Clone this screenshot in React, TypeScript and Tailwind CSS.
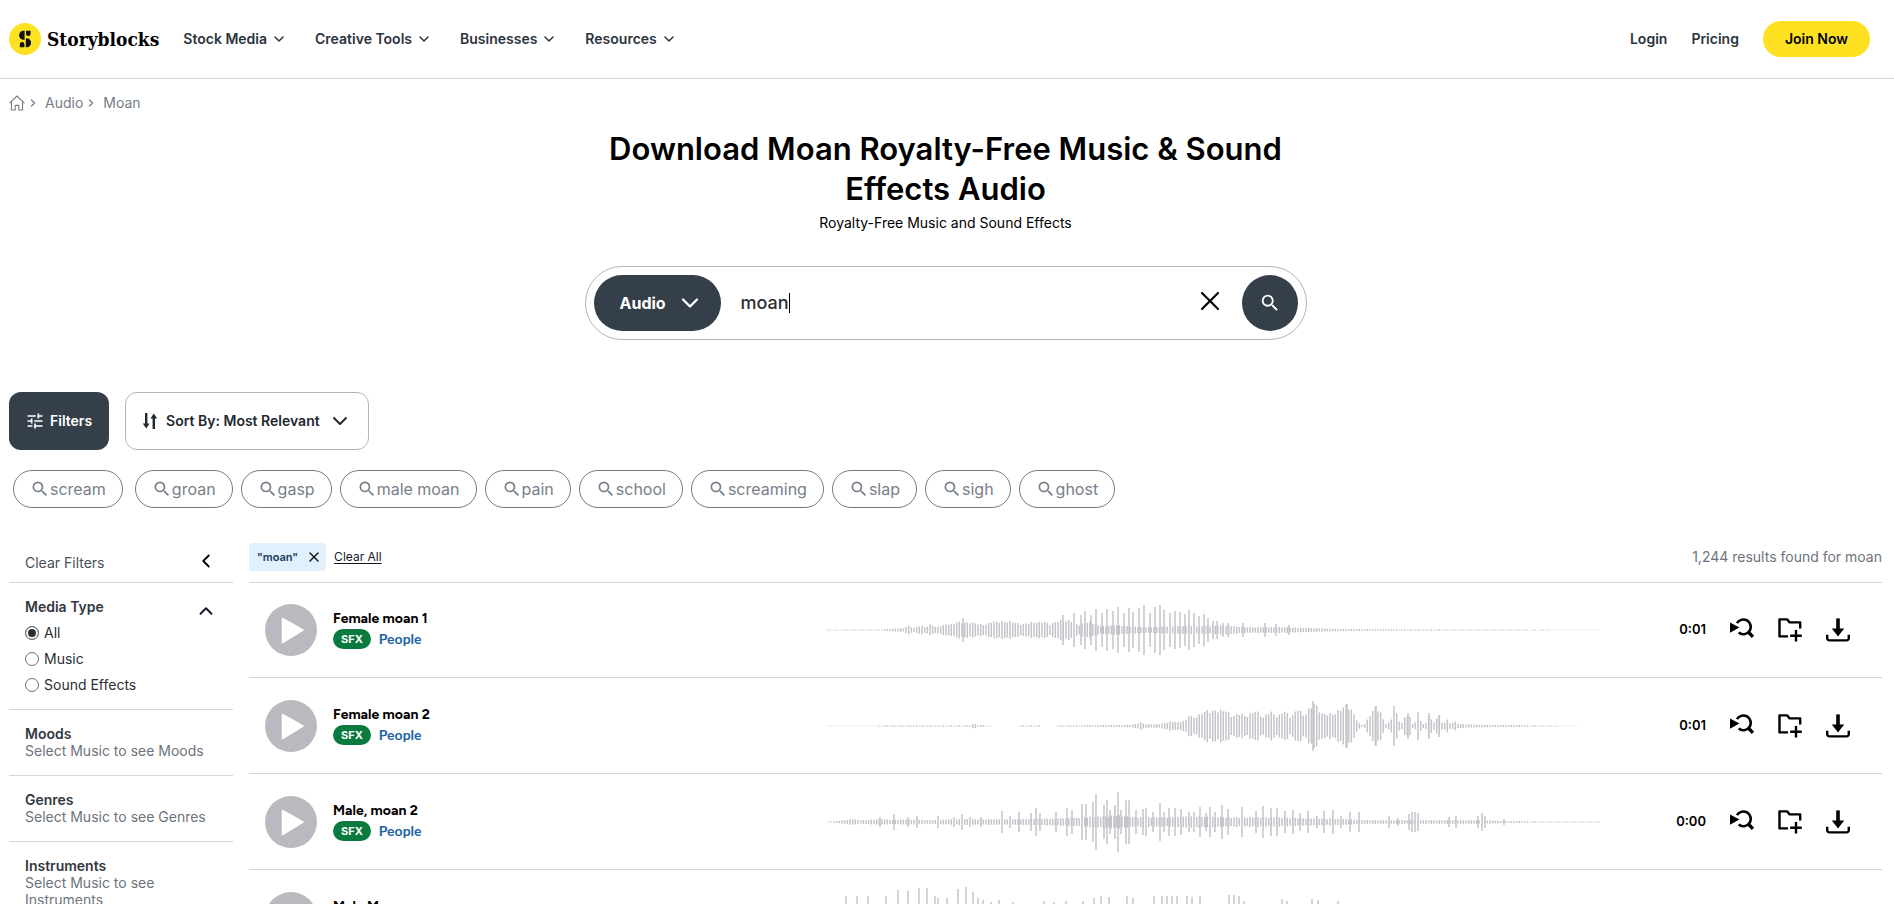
import React from "react";
import { ChevronDown, ChevronLeft, ChevronRight, ChevronUp, X } from "lucide-react";
import { MdSearch, MdTune } from "react-icons/md";

type Point = [number, number];

type Track = {
  title: string;
  duration: string;
  // [x, amplitude] pairs in a 776 x 72 box
  envelope: Point[];
  peaks: Point[];
};

const navItems = ["Stock Media", "Creative Tools", "Businesses", "Resources"];

const suggestions = [
  "scream", "groan", "gasp", "male moan", "pain",
  "school", "screaming", "slap", "sigh", "ghost",
];

const mediaTypes = ["All", "Music", "Sound Effects"];

const lockedFilters = [
  { name: "Moods", hint: "Select Music to see Moods" },
  { name: "Genres", hint: "Select Music to see Genres" },
  { name: "Instruments", hint: "Select Music to see Instruments" },
];

const tracks: Track[] = [
  {
    title: "Female moan 1",
    duration: "0:01",
    envelope: [
      [0, 0.4], [54, 0.5], [66, 1.5], [78, 2], [82, 5], [88, 2], [94, 5], [99, 3], [105, 6], [110, 3], [120, 6],
      [126, 6], [131, 9], [137, 8], [145, 8], [155, 6], [160, 6], [166, 9], [186, 9], [196, 6], [204, 8], [218, 9],
      [224, 6], [232, 10], [246, 10], [252, 5], [262, 9], [274, 4], [290, 5], [320, 3], [345, 4], [375, 4],
      [400, 5], [420, 3], [440, 3], [460, 3], [490, 2], [520, 1], [560, 0.8], [680, 0.5], [776, 0.2],
    ],
    peaks: [
      [137, 12], [237, 15], [248, 17], [255, 15], [259, 19], [265, 15], [270, 21], [276, 17], [281, 21], [287, 19],
      [292, 23], [298, 17], [303, 22], [307, 18], [313, 22], [318, 25], [324, 17], [329, 23], [334, 25], [338, 20],
      [344, 17], [349, 19], [354, 18], [359, 16], [363, 20], [368, 17], [373, 14], [378, 16], [382, 12], [387, 9],
      [391, 9], [397, 7], [402, 7], [417, 7], [439, 7], [450, 6], [463, 5],
    ],
  },
  {
    title: "Female moan 2",
    duration: "0:01",
    envelope: [
      [0, 0.3], [50, 0.3], [55, 0.7], [137, 0.7], [144, 1], [148, 3], [152, 1], [164, 0.5], [168, 0.1], [190, 0.1],
      [195, 0.7], [214, 0.7], [216, 0.1], [230, 0.1], [232, 0.7], [290, 1], [308, 1.5], [314, 4], [320, 2], [335, 2],
      [345, 5], [352, 4], [360, 6], [361, 13], [368, 9], [374, 12], [378, 16], [400, 17], [406, 10], [414, 14],
      [420, 10], [430, 17], [437, 9], [444, 16], [452, 10], [458, 17], [465, 9], [472, 19], [478, 11], [488, 25],
      [496, 13], [508, 13], [521, 23], [527, 15], [532, 4], [535, 1], [539, 2], [545, 14], [550, 21], [556, 12],
      [559, 2], [562, 2], [566, 9], [568, 21], [572, 9], [575, 1], [580, 12], [583, 13], [586, 2], [589, 3],
      [592, 14], [596, 2], [600, 3], [603, 14], [607, 2], [612, 12], [617, 2], [621, 7], [625, 2], [629, 5],
      [633, 2], [660, 1.2], [700, 0.8], [726, 0.5], [740, 0.3], [776, 0.1],
    ],
    peaks: [[487, 25], [521, 22], [550, 20], [568, 20], [582, 13], [592, 13], [603, 13], [613, 11]],
  },
  {
    title: "Male, moan 2",
    duration: "0:00",
    envelope: [
      [0, 0.2], [10, 1], [26, 3], [34, 2], [55, 3], [68, 2], [82, 3], [100, 2], [130, 3], [160, 3], [180, 3],
      [240, 4], [260, 5], [290, 7], [310, 5], [340, 5], [370, 6], [400, 5], [440, 5], [480, 4], [520, 3],
      [540, 2], [560, 2], [640, 2], [660, 2], [680, 1], [720, 0.6], [776, 0.5],
    ],
    peaks: [
      [54, 5], [68, 8], [82, 5], [91, 6], [112, 6], [128, 5], [136, 8], [144, 5], [155, 5], [176, 11], [184, 6],
      [193, 10], [205, 9], [210, 14], [214, 9], [230, 10], [241, 14], [246, 12], [256, 18], [260, 18], [267, 20],
      [270, 28], [278, 17], [281, 22], [284, 12], [289, 17], [292, 30], [295, 12], [300, 22], [303, 22], [310, 12],
      [317, 13], [320, 14], [327, 10], [334, 19], [338, 10], [343, 14], [349, 14], [355, 13], [363, 10], [368, 10],
      [374, 15], [380, 9], [384, 15], [389, 10], [396, 17], [402, 13], [416, 15], [430, 11], [437, 16], [445, 14],
      [451, 14], [459, 11], [467, 12], [474, 9], [482, 11], [491, 6], [498, 11], [507, 12], [515, 6], [524, 10],
      [533, 10], [563, 6], [572, 4], [583, 8], [586, 10], [589, 10], [592, 9], [623, 5], [630, 6], [652, 6],
      [656, 9], [659, 6], [678, 3],
    ],
  },
  {
    title: "Male Moan",
    duration: "0:01",
    envelope: [[0, 1], [20, 6], [80, 11], [150, 12], [240, 7], [330, 10], [420, 10], [520, 8], [700, 3], [776, 1]],
    peaks: [
      [20, 22], [31, 22], [42, 22], [60, 22], [72, 28], [82, 27], [93, 30], [101, 30], [109, 22], [112, 20],
      [121, 20], [132, 29], [140, 31], [147, 26], [152, 20], [157, 18], [165, 16], [173, 18], [187, 16], [218, 17],
      [228, 16], [240, 17], [257, 17], [268, 20], [275, 22], [283, 21], [301, 22], [307, 20], [328, 22], [336, 22],
      [341, 22], [346, 22], [351, 22], [361, 22], [366, 21], [374, 22], [403, 23], [408, 23], [413, 22], [418, 17],
      [456, 19], [461, 17], [486, 19], [492, 18], [512, 17],
    ],
  },
];

function amplitudeAt(x: number, points: Point[]) {
  for (let i = 1; i < points.length; i++) {
    const [x0, y0] = points[i - 1];
    const [x1, y1] = points[i];
    if (x <= x1) return y0 + ((y1 - y0) * (x - x0)) / (x1 - x0);
  }
  return 0;
}

function wavePath(track: Track) {
  let d = "";
  for (let i = 0; i < 291; i++) {
    const x = i * (8 / 3);
    const wobble = 0.9 + 0.1 * Math.sin(i * 2.3);
    const a = amplitudeAt(x, track.envelope) * wobble;
    if (a > 0.2) d += `M${x.toFixed(1)} ${(36 - a).toFixed(1)}V${(36 + a).toFixed(1)}`;
  }
  track.peaks.forEach(([x, a]) => {
    d += `M${x} ${36 - a}V${36 + a}`;
  });
  return d;
}

function Waveform({ track }: { track: Track }) {
  return (
    <svg viewBox="0 0 776 72" className="w-[776px] h-[72px] shrink text-[#c4c5ca]" aria-hidden="true">
      <path d={wavePath(track)} stroke="currentColor" strokeWidth="1.5" fill="none" />
    </svg>
  );
}

function LogoMark() {
  return (
    <svg viewBox="0 0 32 32" className="w-8 h-8" fill="#111" aria-hidden="true">
      <circle cx="16" cy="16" r="16" fill="#fee121" />
      <path d="M15.6 7.7v9h-1a4.5 4.5 0 0 1 0-9z" />
      <path d="M16.8 15.3h.8a4.5 4.5 0 0 1 0 9h-.8z" />
      <path d="M17 7.7h4.6v3a2.3 2.3 0 0 1-4.6 0z" />
      <path d="M10.8 24.3v-3a2.3 2.3 0 0 1 4.6 0v3z" />
    </svg>
  );
}

function HomeIcon() {
  return (
    <svg viewBox="0 0 16 16" className="w-4 h-4" fill="none" stroke="currentColor" strokeWidth="1.1" strokeLinejoin="round" strokeLinecap="round" aria-hidden="true">
      <path d="M.8 7.8 8 1l7.2 6.8M2.4 6.6V15h3.8v-4.6h3.6V15h3.8V6.6" />
    </svg>
  );
}

function SortIcon() {
  return (
    <svg viewBox="0 0 16 18" className="w-4 h-[18px]" aria-hidden="true">
      <path d="M4.2 1v12M11.8 17V5" stroke="currentColor" strokeWidth="2.4" fill="none" />
      <path d="M.8 11.5h6.8l-3.4 5.1zM8.4 6.5h6.8l-3.4-5.1z" fill="currentColor" />
    </svg>
  );
}

function SimilarIcon() {
  return (
    <svg viewBox="0 0 24 24" className="w-6 h-6" aria-hidden="true">
      <path d="M6.9 5.2A7.4 7.4 0 1 1 8.6 14.6" stroke="currentColor" strokeWidth="2.6" fill="none" />
      <path d="m18 13.8 5 5" stroke="currentColor" strokeWidth="3.4" fill="none" />
      <path d="M0 4.4 9.4 9.6 0 14.8z" fill="currentColor" />
    </svg>
  );
}

function FolderPlusIcon() {
  return (
    <svg viewBox="0 0 24 24" className="w-6 h-6" fill="none" stroke="currentColor" strokeWidth="2.4" strokeLinejoin="round" aria-hidden="true">
      <path d="M10 18.4H1.5V1.4h7.8l2.4 3h10.5v6" />
      <path d="M18 12v11.4M12.2 17.7h11.6" />
    </svg>
  );
}

function DownloadIcon() {
  return (
    <svg viewBox="0 0 24 24" className="w-6 h-6" aria-hidden="true">
      <path d="M12 .4v11" stroke="currentColor" strokeWidth="3.6" fill="none" />
      <path d="M5.8 10.6h12.4L12 18.6z" fill="currentColor" />
      <path d="M1.2 16.8v3.4a2.2 2.2 0 0 0 2.2 2.2h17.2a2.2 2.2 0 0 0 2.2-2.2v-3.4" stroke="currentColor" strokeWidth="2.4" fill="none" />
    </svg>
  );
}

function TrackRow({ track }: { track: Track }) {
  return (
    <li className="h-24 flex items-center border-b border-gray-300 pl-4 pr-8">
      <button type="button" aria-label={`Play ${track.title}`} className="w-[52px] h-[52px] shrink-0 rounded-full bg-[#b9bac0] text-white">
        <svg viewBox="0 0 52 52" className="w-full h-full" aria-hidden="true">
          <path d="M17.5 14.5 38 26 17.5 38.5z" fill="currentColor" stroke="currentColor" strokeWidth="1.5" strokeLinejoin="round" />
        </svg>
      </button>
      <div className="ml-4 pb-0.5 flex-1">
        <h2 className="text-sm leading-5 font-bold text-black font-[Figtree,Lato,sans-serif]">{track.title}</h2>
        <div className="flex items-center gap-2">
          <span className="h-5 px-2 rounded-full bg-[#0b7a3e] text-white text-[11px] leading-5 font-bold">SFX</span>
          <a href="#people" className="text-sm leading-5 font-bold text-[#1a64a6] font-[Lato,sans-serif]">People</a>
        </div>
      </div>
      <Waveform track={track} />
      <span className="w-[104px] shrink-0 text-right text-[13px] font-semibold text-black">{track.duration}</span>
      <div className="ml-6 flex items-center gap-6 text-black">
        <button type="button" aria-label="Find similar" className="w-6 h-6"><SimilarIcon /></button>
        <button type="button" aria-label="Add to folder" className="w-6 h-6"><FolderPlusIcon /></button>
        <button type="button" aria-label="Download" className="w-6 h-6"><DownloadIcon /></button>
      </div>
    </li>
  );
}

export default function App() {
  return (
    <div className="h-screen overflow-hidden bg-white text-gray-900 font-[Inter,sans-serif]">
      {/* Top navigation */}
      <header className="h-[79px] border-b border-gray-300 pl-[9px] pr-6 flex items-center">
        <a href="#home" className="flex items-center gap-1.5">
          <LogoMark />
          <span className="text-[19px] font-bold text-black font-['DejaVu_Serif_Condensed','DejaVu_Serif',serif]">Storyblocks</span>
        </a>
        <nav className="ml-6 flex items-center gap-7">
          {navItems.map((item) => (
            <button key={item} type="button" className="flex items-center gap-1 text-sm font-semibold text-[#2b333d]">
              {item}
              <ChevronDown size={16} strokeWidth={2.2} />
            </button>
          ))}
        </nav>
        <div className="ml-auto flex items-center gap-6 text-sm font-semibold text-[#2b333d]">
          <a href="#login">Login</a>
          <a href="#pricing">Pricing</a>
          <a href="#join" className="h-9 px-[22px] rounded-full bg-[#fee121] text-black flex items-center">Join Now</a>
        </div>
      </header>

      <main className="pl-[9px] pr-3">
        <nav aria-label="Breadcrumb" className="h-12 flex items-center gap-0.5 text-sm text-[#767d88]">
          <a href="#home" aria-label="Home"><HomeIcon /></a>
          <ChevronRight size={12} strokeWidth={2.5} />
          <a href="#audio" className="ml-1">Audio</a>
          <ChevronRight size={12} strokeWidth={2.5} />
          <span className="ml-1">Moan</span>
        </nav>

        {/* Title and search */}
        <section className="pt-0.5 flex flex-col items-center text-center">
          <h1 className="max-w-[740px] text-[31px] leading-10 font-semibold text-black">
            Download Moan Royalty-Free Music &amp; Sound Effects Audio
          </h1>
          <p className="mt-1 text-sm text-black">Royalty-Free Music and Sound Effects</p>
          <form className="mt-[33px] w-full max-w-[722px] h-[74px] p-2 rounded-full border border-[#b4b6ba] flex items-center" onSubmit={(e) => e.preventDefault()}>
            <button type="button" className="w-[127px] h-14 pl-[26px] rounded-full bg-[#353f4a] text-white font-bold flex items-center gap-2.5">
              Audio
              <ChevronDown size={28} strokeWidth={2} />
            </button>
            <input
              aria-label="Search audio"
              type="text"
              defaultValue="moan"
              className="ml-5 field-sizing-content text-lg font-medium text-[#2b2f33] outline-none"
            />
            <span className="w-px h-5 bg-black" />
            <button type="button" aria-label="Clear search" className="ml-auto pb-1 text-black">
              <X size={32} strokeWidth={1.6} />
            </button>
            <button type="submit" aria-label="Search" className="ml-4 w-14 h-14 rounded-full bg-[#353f4a] text-white flex items-center justify-center">
              <MdSearch size={22} />
            </button>
          </form>
        </section>

        <div className="mt-[52px] flex gap-4 text-sm font-semibold">
          <button type="button" className="h-[58px] pl-4 pr-[17px] rounded-xl bg-[#353f4a] text-white flex items-center gap-[5px]">
            <MdTune size={20} />
            Filters
          </button>
          <button type="button" className="h-[58px] px-4 rounded-xl border border-[#b4b6ba] text-[#22282f] flex items-center gap-2">
            <SortIcon />
            Sort By: Most Relevant
            <ChevronDown size={24} strokeWidth={2} />
          </button>
        </div>

        {/* Related searches */}
        <ul className="mt-5 ml-1 flex gap-2">
          {suggestions.map((tag) => (
            <li key={tag} className="first:mr-1">
              <a href={`#${tag}`} className="h-[38px] px-4 rounded-full border border-[#777b80] text-[#77808a] flex items-center">
                <MdSearch size={20} />
                {tag}
              </a>
            </li>
          ))}
        </ul>

        <div className="mt-[31px] flex gap-4 items-start">
          <aside className="w-56 shrink-0 text-sm">
            <div className="h-11 px-4 flex items-center justify-between border-b border-gray-300 text-[#4a4f57]">
              <button type="button" className="pt-1">Clear Filters</button>
              <button type="button" aria-label="Collapse filters" className="text-black">
                <ChevronLeft size={22} strokeWidth={2} />
              </button>
            </div>
            <fieldset className="px-4 pt-[11px] pb-[11px] border-b border-gray-300">
              <div className="h-[26px] flex items-center justify-between">
                <legend className="font-semibold text-[#33383f]">Media Type</legend>
                <ChevronUp size={22} strokeWidth={2} className="mt-2" />
              </div>
              {mediaTypes.map((type) => (
                <label key={type} className="h-[26px] flex items-center gap-[5px] text-[#2b2f33]">
                  <input
                    type="radio"
                    name="media-type"
                    defaultChecked={type === "All"}
                    className="appearance-none w-3.5 h-3.5 rounded-full border border-[#6b7078] checked:bg-[#2b2f33] checked:shadow-[inset_0_0_0_2px_white]"
                  />
                  {type}
                </label>
              ))}
            </fieldset>
            {lockedFilters.map((filter) => (
              <section key={filter.name} className="px-4 pt-[15px] pb-4 border-b border-gray-300 leading-[17px]">
                <h2 className="font-semibold text-[#33383f]">{filter.name}</h2>
                <p className="text-[#6d737c]">{filter.hint}</p>
              </section>
            ))}
          </aside>

          <section className="flex-1 min-w-0">
            <div className="h-11 flex items-start border-b border-gray-300">
              <div className="mt-1 h-7 pl-2 pr-1 rounded-sm bg-[#e1f0fd] text-[11px] font-semibold text-[#173a5c] flex items-center gap-2">
                "moan"
                <button type="button" aria-label="Remove moan" className="text-[#111]"><X size={16} strokeWidth={2} /></button>
              </div>
              <button type="button" className="mt-1 ml-2 h-7 text-xs underline underline-offset-2">Clear All</button>
              <p className="mt-1 ml-auto text-sm leading-7 text-[#6d737c]">1,244 results found for moan</p>
            </div>
            <ul className="-mt-px">
              {tracks.map((track) => (
                <TrackRow key={track.title} track={track} />
              ))}
            </ul>
          </section>
        </div>
      </main>
    </div>
  );
}
